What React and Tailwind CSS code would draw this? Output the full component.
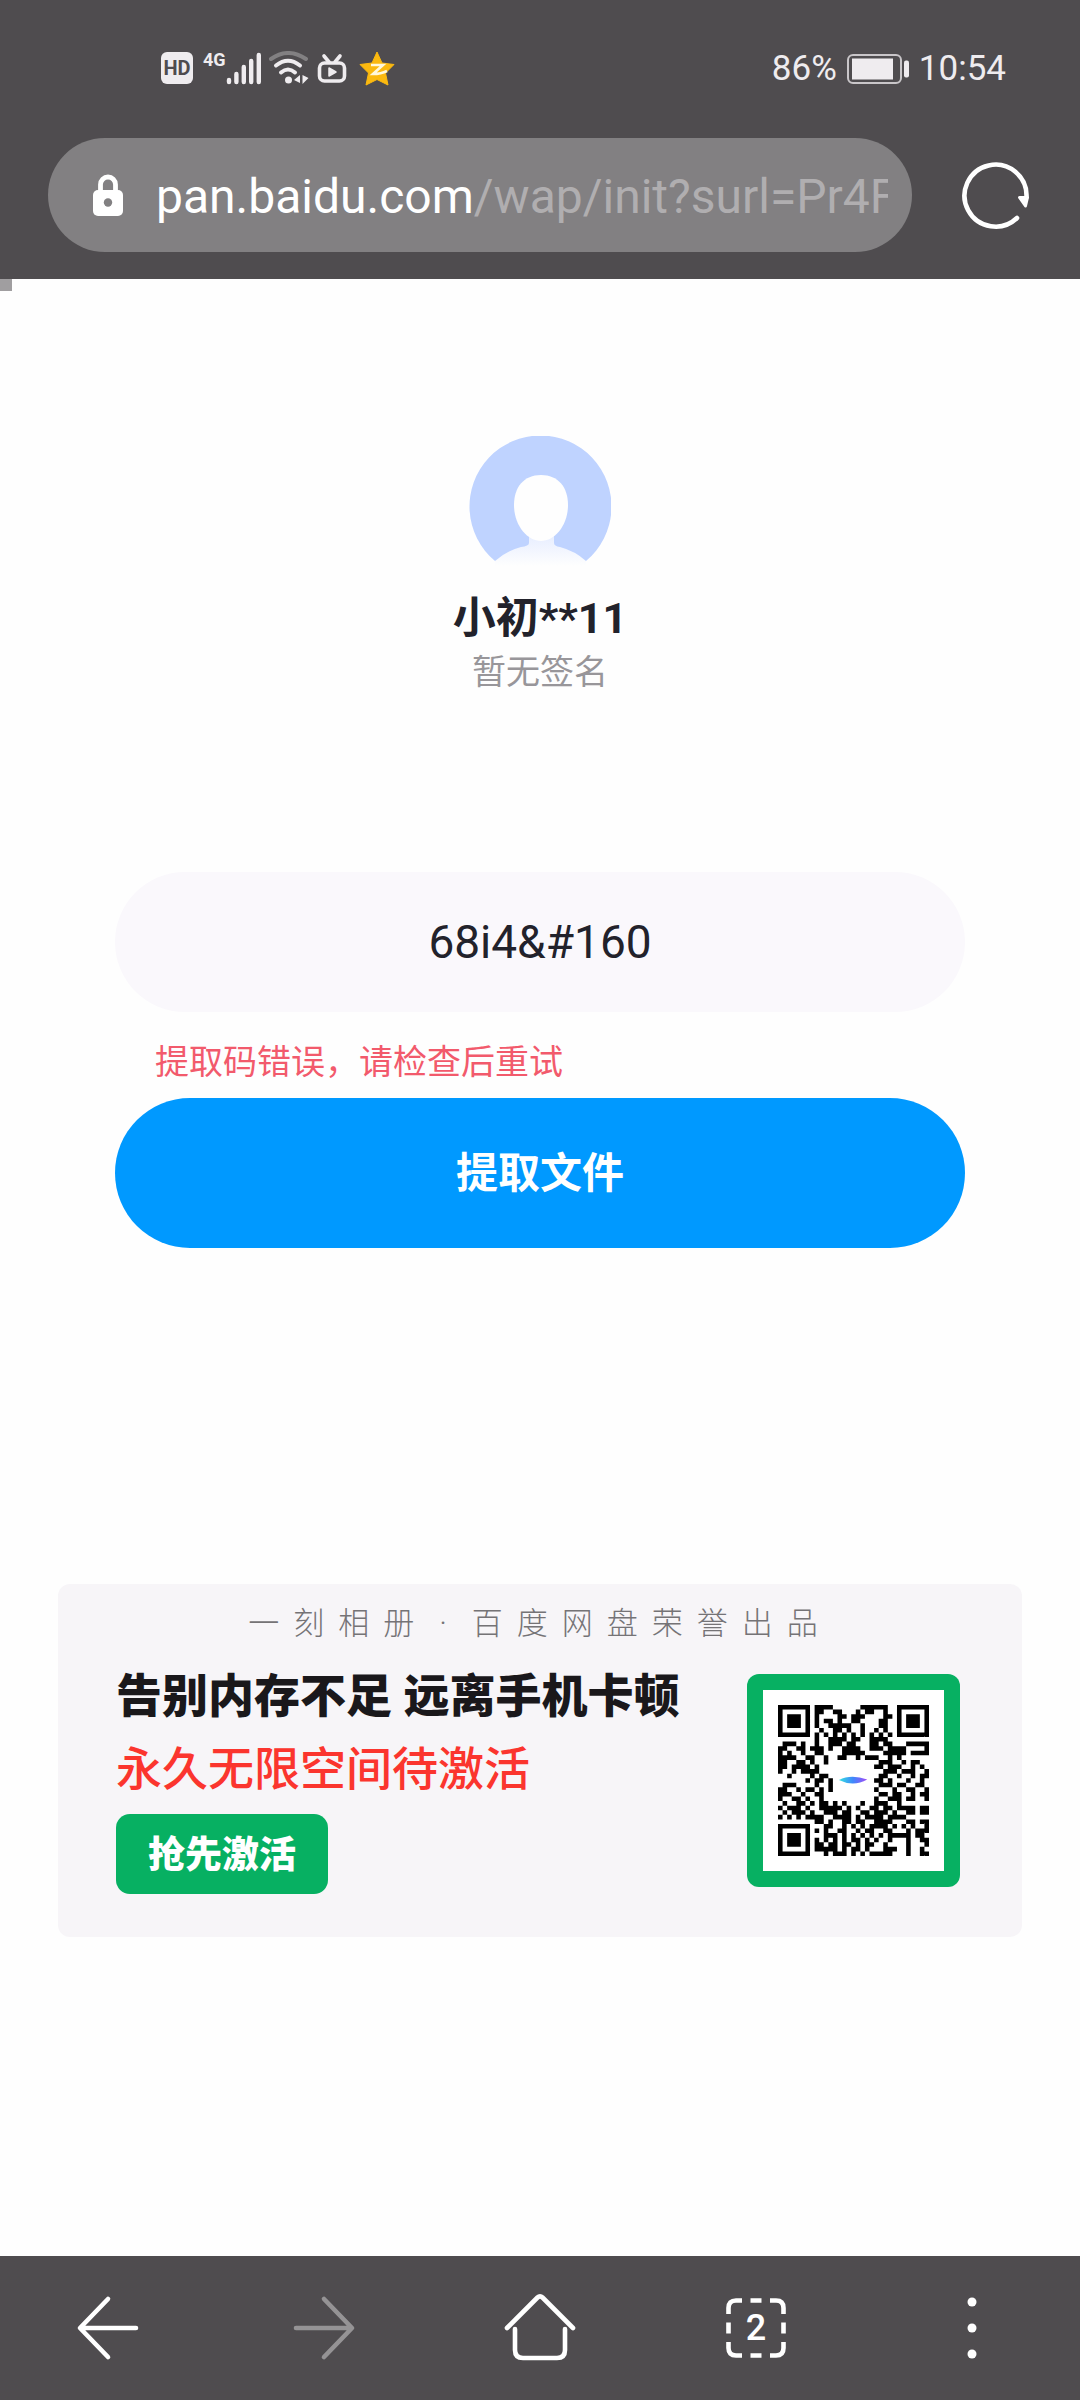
import React, { useState } from "react";

// 33 x 33 modules, "#" is a dark one
const QR_ROWS = [
  "#######.####......######..#######",
  "#.....#.##..##...#.##..#..#.....#",
  "#.###.#.#....##.###....##.#.###.#",
  "#.###.#.#.##.#..##....##..#.###.#",
  "#.###.#.#..#####..#...##..#.###.#",
  "#.....#..#..##.#..#..#.#..#.....#",
  "#######.#.#.#.#.#.#.#.#.#.#######",
  "........#..####.##..####.........",
  ".###.#..#..###.##...##.##...#####",
  "##..##.###.#..####..###.####....#",
  "#.#..#..##....#####....#####.####",
  "####..##..#..##..#.###..#.#......",
  "##..##.#..#...........###..#.##..",
  "##.####.#............##.###..#.#.",
  "#..#.####..............###.###..#",
  "..#....#.##...........##..#..#.##",
  "......#.##.#.........##.#...#..#.",
  ".###....#..#..........###.##..##.",
  "##..#.##.#.#.........#...#..##..#",
  "###..#..##............##.##..#.##",
  "#..##.#..#...........#..###.##..#",
  ".#..##.#.##.#.#...#..###..#......",
  "#.###.#..#####.#.#..##.##.####.##",
  ".#.###.#..###.##..##.###.#..##.##",
  "#.#.#.####..####.#.####.####.....",
  "........##.#..##.##..####...##.##",
  "#######...##..#.#.#.####.#.#.#..#",
  "#.....#.#.#..##..#.##..##...#.###",
  "#.###.#...###.#.#.#.#.#.#####.##.",
  "#.###.#.#.#.#.#.##.#.#..#...#..##",
  "#.###.#.##.##.##.#.##..#....#...#",
  "#.....#.#####.#.##.#...###..#..#.",
  "#######...#.###.#.#.#####...#..##",
];

const QrCode = () => {
  const path = QR_ROWS.map((row, y) =>
    [...row].map((cell, x) => (cell === "#" ? `M${x} ${y}h1v1h-1z` : "")).join("")
  ).join("");
  return (
    <svg viewBox="0 0 33 33" className="w-full" role="img" aria-label="QR code">
      <defs>
        <linearGradient id="leaf" x1="0" x2="1">
          <stop offset="0" stopColor="#34e3e0" />
          <stop offset="0.5" stopColor="#3f87fb" />
          <stop offset="1" stopColor="#a24bf7" />
        </linearGradient>
      </defs>
      <path d={path} fill="#000" />
      <path d="M13.3 16.4Q16 15 19.5 16.3Q16.5 18 13.3 16.4z" fill="url(#leaf)" />
    </svg>
  );
};

const StatusBar = () => (
  <div className="flex h-[138px] items-start justify-between pt-12 pr-[74px] pl-[161px] text-[#efecef]">
    <div className="flex h-10 items-center">
      <span className="flex size-8 items-center justify-center rounded-md bg-[#efecef] text-[20px] font-bold text-[#4f4c4f]">
        HD
      </span>
      <span className="ml-2.5 self-start text-[18px] leading-6 font-bold">4G</span>
      <svg width="36" height="34" viewBox="0 0 36 34" stroke="currentColor" strokeWidth="4.4" strokeLinecap="round">
        <path d="M3 29v2M10.4 23v8M17.8 16v15M25.2 10v21M32.8 4v27" />
      </svg>
      <svg className="ml-1.5" width="42" height="34" viewBox="0 0 42 34" fill="none" strokeLinecap="round">
        <path d="M3 8Q20-4 38 8" stroke="#828082" strokeWidth="4" />
        <path d="M8 14.500Q20 5 32 14.500M13 21.500Q20 15.500 27 21.500" stroke="currentColor" strokeWidth="4" />
        <circle cx="20.500" cy="29" r="3.500" fill="currentColor" />
        <path d="M32 24v8l-6-3zM34.500 24v9l6-6z" fill="currentColor" />
      </svg>
      <svg className="ml-1.5" width="32" height="34" viewBox="0 0 32 34" fill="none" stroke="currentColor" strokeWidth="3.600" strokeLinecap="round">
        <rect x="3.500" y="12" width="25" height="18" rx="5" />
        <path d="M8 5l5 6M24 5l-5 6" />
        <path d="M13 17v8l7-4z" fill="currentColor" strokeWidth="1.500" strokeLinejoin="round" />
      </svg>
      <svg className="ml-2.5" width="38" height="38" viewBox="0 0 38 38">
        <path
          d="M19 3l5 11 12 1.500-8.500 8.500 2.500 12L19 30.500 8 36l2.500-12L2 15.500 14 14z"
          fill="#fbb90f"
          stroke="#fbb90f"
          strokeLinejoin="round"
        />
        <path d="M13 16h12l-10 9q8 0 14-3" fill="none" stroke="#fff8dc" strokeWidth="2.600" />
      </svg>
    </div>
    <div className="flex h-[42px] items-center text-[35px] leading-10">
      <span>86%</span>
      <svg className="mx-2.5" width="62" height="32" viewBox="0 0 62 32" fill="none">
        <rect x="1" y="2" width="53" height="28" rx="5" stroke="#c9c6c9" strokeWidth="2" />
        <rect x="5" y="5.500" width="41" height="21" fill="currentColor" />
        <rect x="57" y="7.500" width="5" height="17" rx="2" fill="currentColor" />
      </svg>
      <span>10:54</span>
    </div>
  </div>
);

const AddressBar = () => (
  <div className="flex items-center pr-[48px] pb-[27px] pl-12">
    <div className="flex h-[114px] min-w-0 flex-1 items-center rounded-full bg-[#828082] pr-6 pl-[45px]">
      <svg className="shrink-0" width="30" height="42" viewBox="0 0 30 42">
        <path d="M7.500 18V10.500a7.500 7.500 0 0 1 15 0V18" fill="none" stroke="#fff" strokeWidth="4.800" />
        <rect y="16" width="30" height="26" rx="5" fill="#fff" />
        <circle cx="15" cy="28.500" r="4.200" fill="#828082" />
      </svg>
      <a href="#" className="ml-[33px] min-w-0 flex-1 overflow-hidden pt-1 text-[48px] leading-[64px] whitespace-nowrap text-white">
        pan.baidu.com<span className="text-[#b0aeb0]">/wap/init?surl=Pr4F</span>
      </a>
    </div>
    <button aria-label="Reload" className="ml-12">
      <svg width="72" height="72" viewBox="0 0 72 72" fill="none" stroke="#fff" strokeWidth="4.600" strokeLinecap="round">
        <path d="M57 59A31 31 0 1 1 66.500 38" />
        <path d="M59.500 38.500h8l-2 8.500z" fill="#fff" strokeWidth="3" strokeLinejoin="round" />
      </svg>
    </button>
  </div>
);

const Avatar = () => (
  <svg width="142" height="142" viewBox="0 0 142 142" aria-hidden="true">
    <defs>
      <linearGradient id="body" x1="0" y1="0" x2="0" y2="1">
        <stop offset="0" stopColor="#e6edff" />
        <stop offset="1" stopColor="#fefefe" />
      </linearGradient>
    </defs>
    <path d="M26 125A71 71 0 1 1 117 125z" fill="#bfd3ff" />
    <path d="M60 98h25v9q0 3 6 4 15 4 26 14v5H26v-5q11-10 26-14 8-1 8-4z" fill="url(#body)" />
    <path d="M72 39c17 0 27 12 27 30 0 20-13 36-27 36S45 89 45 69c0-18 10-30 27-30z" fill="#fefefe" />
  </svg>
);

const Banner = () => (
  <section className="mx-[58px] mt-[336px] rounded-xl bg-[#f7f5f8] pt-4 pb-[43px]">
    <p className="text-center text-[31px] leading-[48px] font-light tracking-[14px] text-[#757376]">
      一刻相册<span className="mx-[11px]">·</span>百度网盘荣誉出品
    </p>
    <div className="mt-3 flex items-start justify-between pr-[62px] pl-[58px]">
      <div>
        <h2 className="text-[46px] leading-[72px] font-black text-[#1a181b]">告别内存不足 远离手机卡顿</h2>
        <p className="text-[46px] leading-[74px] font-medium text-[#fb352e]">永久无限空间待激活</p>
        <button className="mt-2 h-20 w-[212px] rounded-[14px] bg-[#07b062] pt-1 text-[37px] font-black text-white">
          抢先激活
        </button>
      </div>
      <div className="mt-3.5 w-[213px] rounded-xl bg-[#07b062] p-4">
        <div className="bg-white p-[15px]">
          <QrCode />
        </div>
      </div>
    </div>
  </section>
);

const NavBar = () => (
  <nav className="grid h-36 grid-cols-5 bg-[#4f4c4f]">
    <button aria-label="Back" className="flex items-center justify-center">
      <svg width="72" height="72" viewBox="0 0 72 72" fill="none" stroke="#fff" strokeWidth="4.600" strokeLinecap="round" strokeLinejoin="round">
        <path d="M64 36H9M36 7L8 36l28 29" />
      </svg>
    </button>
    <button aria-label="Forward" disabled className="flex items-center justify-center">
      <svg width="72" height="72" viewBox="0 0 72 72" fill="none" stroke="#959395" strokeWidth="4.600" strokeLinecap="round" strokeLinejoin="round">
        <path d="M8 36h55M36 7l28 29-28 29" />
      </svg>
    </button>
    <button aria-label="Home" className="flex items-center justify-center">
      <svg width="72" height="72" viewBox="0 0 72 72" fill="none" stroke="#fff" strokeWidth="4.600" strokeLinecap="round" strokeLinejoin="round">
        <path d="M3 36L33.500 5.500Q36 3 38.500 5.500L69 36" />
        <path d="M11 37v21q0 8 8 8h34q8 0 8-8V37" />
      </svg>
    </button>
    <button aria-label="Tabs" className="flex items-center justify-center">
      <span className="grid place-items-center">
        <svg className="col-start-1 row-start-1" width="62" height="62" viewBox="0 0 62 62" fill="none" stroke="#fff" strokeWidth="4.600">
          <path d="M3.500 17V11q0-7.500 7.500-7.500h6M45 3.500h6q7.500 0 7.500 7.500v6M58.500 45v6q0 7.500-7.500 7.500h-6M17 58.500h-6q-7.500 0-7.500-7.500v-6" />
          <path d="M25.500 3.500h11M25.500 58.500h11M3.500 25.500v11M58.500 25.500v11" />
        </svg>
        <span className="col-start-1 row-start-1 text-[36px] leading-9 font-medium text-white">2</span>
      </span>
    </button>
    <button aria-label="Menu" className="flex items-center justify-center">
      <svg width="12" height="64" viewBox="0 0 12 64" fill="#fff">
        <circle cx="6" cy="6" r="4.500" />
        <circle cx="6" cy="32" r="4.500" />
        <circle cx="6" cy="58" r="4.500" />
      </svg>
    </button>
  </nav>
);

const App = () => {
  const [code, setCode] = useState("68i4&#160");

  return (
    <div
      lang="zh-CN"
      className="flex min-h-screen flex-col bg-[#fefefe] font-[Roboto,'Noto_Sans_CJK_SC',sans-serif]"
    >
      <header className="bg-[#4f4c4f]">
        <StatusBar />
        <AddressBar />
      </header>

      <main className="flex-1 pb-16">
        {/* Page load progress */}
        <div className="size-3 bg-[#a09ea0]" />

        {/* Owner of the share */}
        <div className="flex flex-col items-center pt-[145px]">
          <Avatar />
          <h1 className="mt-2.5 text-[43px] leading-[60px] font-bold text-[#22222b]">小初**11</h1>
          <p className="text-[34px] leading-[48px] text-[#98969a]">暂无签名</p>
        </div>

        {/* Extraction code */}
        <form className="mt-44 px-[115px]" onSubmit={(e) => e.preventDefault()}>
          <input
            type="text"
            aria-label="提取码"
            aria-describedby="code-error"
            className="block h-[140px] w-full rounded-full bg-[#faf8fc] text-center text-[46px] text-[#22222b]"
            value={code}
            onChange={(e) => setCode(e.target.value)}
          />
          <p id="code-error" className="px-10 pt-[26px] pb-3 text-[34px] leading-[48px] text-[#f25a6c]">
            提取码错误，请检查后重试
          </p>
          <button className="h-[150px] w-full rounded-full bg-[#0099ff] text-[42px] font-bold text-white">
            提取文件
          </button>
        </form>

        <Banner />
      </main>

      <NavBar />
    </div>
  );
};

export default App;
